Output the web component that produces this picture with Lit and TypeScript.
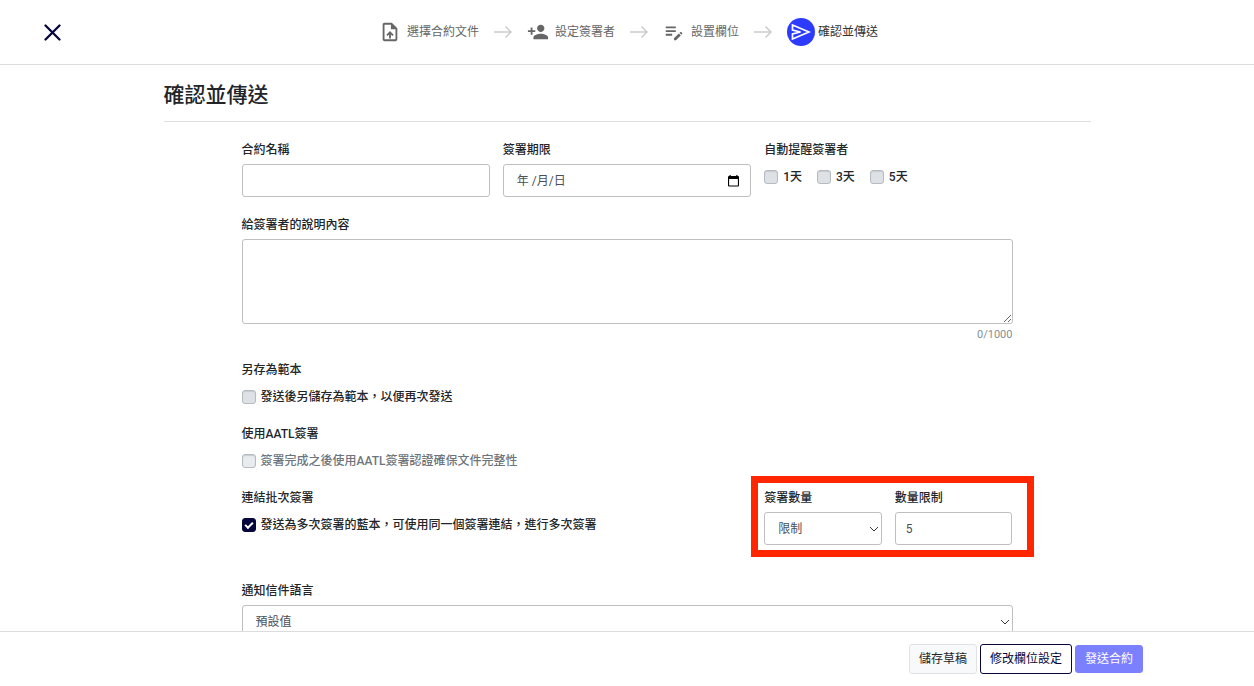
import { LitElement, html, css, svg } from "lit";
import { customElement, state } from "lit/decorators.js";

const uploadIcon = svg`<path d="M14 2H6c-1.1 0-1.99.9-1.99 2L4 20c0 1.1.89 2 1.99 2H18c1.1 0 2-.9 2-2V8l-6-6zm4 18H6V4h7v5h5v11zM8 15.01l1.41 1.41L11 14.84V19h2v-4.16l1.59 1.59L16 15.01 12.01 11 8 15.01z"/>`;
const personIcon = svg`<path d="M15 12c2.21 0 4-1.79 4-4s-1.79-4-4-4-4 1.79-4 4 1.79 4 4 4zm-9-2V7H4v3H1v2h3v3h2v-3h3v-2H6zm9 4c-2.67 0-8 1.34-8 4v2h16v-2c0-2.66-5.33-4-8-4z"/>`;
const fieldsIcon = svg`<path d="M3 10h11v2H3v-2zm0-2h11V6H3v2zm0 8h7v-2H3v2zm15.01-3.13.71-.71c.39-.39 1.02-.39 1.41 0l.71.71c.39.39.39 1.02 0 1.41l-.71.71-2.12-2.12zm-.71.71-5.3 5.3V21h2.12l5.3-5.3-2.12-2.12z"/>`;

const steps = [
  { label: "選擇合約文件", icon: uploadIcon },
  { label: "設定簽署者", icon: personIcon },
  { label: "設置欄位", icon: fieldsIcon },
];

@customElement("app-root")
export class AppRoot extends LitElement {
  static styles = css`
    :host {
      display: flex;
      flex-direction: column;
      height: 100vh;
      background: #fff;
      color: #212529;
      font: 12px/18px Roboto, "Noto Sans CJK TC", sans-serif;
    }
    *, *::before, *::after { box-sizing: border-box; }
    input, textarea, select, button { font: inherit; color: inherit; margin: 0; }
    svg { display: block; }

    .top {
      display: grid;
      grid-template-columns: 1fr auto 1fr;
      align-items: center;
      height: 65px;
      flex: none;
      border-bottom: 1px solid #dcdcdf;
    }
    .close {
      justify-self: start;
      margin-left: 40px;
      padding: 4px;
      border: 0;
      background: none;
      color: #06063c;
      cursor: pointer;
    }
    .steps {
      display: flex;
      align-items: center;
      gap: 14px;
      margin: 0;
      padding: 0 0 0 3px;
      list-style: none;
      color: #666;
    }
    .step { display: flex; align-items: center; gap: 6px; }
    .step.current { gap: 3px; color: #333; }
    .arrow { color: #ccc; }
    .disc {
      display: grid;
      place-items: center;
      width: 28px;
      height: 28px;
      border-radius: 50%;
      background: #2d3bff;
      color: #fff;
    }

    .scroll { flex: 1; min-height: 0; overflow-y: auto; scrollbar-width: none; }
    .page { max-width: 927px; margin: 0 auto; padding-bottom: 24px; }
    h1 {
      margin: 0;
      padding: 14px 0 10px;
      border-bottom: 1px solid #dedede;
      font-size: 21px;
      line-height: 32px;
      font-weight: 500;
    }
    .form { padding: 19px 78px 0; }
    .grid { display: grid; grid-template-columns: repeat(6, 1fr); column-gap: 13px; }
    .two { grid-column: span 2; }
    .four { grid-column: span 4; }
    .label, .check { font-weight: 500; }
    .label { display: block; margin-bottom: 5px; padding: 0; }
    .group { border: 0; margin: 0; padding: 0; min-width: 0; }
    .block { margin-top: 19px; }
    .section { margin-bottom: 19px; }
    .section .label, .group .label { margin-bottom: 9px; }

    .control {
      display: block;
      width: 100%;
      height: 33px;
      padding: 0 10px;
      border: 1px solid #bfbfbf;
      border-radius: 3px;
      background: #fff;
      color: #495057;
    }
    .area { height: 85px; padding: 6px 10px; }
    .date { display: flex; align-items: center; padding: 0 11px 0 13px; }
    .date input { flex: 1; min-width: 0; padding: 0; border: 0; outline: 0; background: none; }
    .date input::placeholder { color: #495057; opacity: 1; }
    .date button { padding: 0; border: 0; background: none; color: #000; }
    .select { display: grid; align-items: center; }
    .select > * { grid-area: 1 / 1; }
    .select select { appearance: none; padding: 0 24px 0 13px; }
    .select svg { justify-self: end; margin-right: 3px; color: #343a40; pointer-events: none; }
    .count { margin-top: 2px; font-size: 11px; line-height: 18px; text-align: right; color: #868e96; }
    .count + .section, .area + .section { margin-top: 0; }

    .checks { display: flex; gap: 15px; }
    .check { display: flex; align-items: center; gap: 5px; }
    .check.muted { color: #6c757d; }
    .check input {
      appearance: none;
      display: grid;
      place-items: center;
      flex: none;
      width: 14px;
      height: 14px;
      border: 1px solid #b5bbc1;
      border-radius: 3px;
      background: #dee2e6;
      box-shadow: inset 0 1px 1px #c6cbd0;
    }
    .check.muted input { background: #e9ecef; }
    .check input:checked { border-color: #06063c; background: #06063c; box-shadow: none; }
    .check input:checked::before {
      content: "";
      width: 8px;
      height: 5px;
      margin-bottom: 2px;
      border: solid #fff;
      border-width: 0 0 2px 2px;
      transform: rotate(-45deg);
    }

    .templates { margin-top: 17px; }
    .limits {
      position: relative;
      display: grid;
      grid-template-columns: 1fr 1fr;
      gap: 13px;
    }
    .limits::after {
      content: "";
      position: absolute;
      inset: -13px -22px -12px -13px;
      border: 7px solid #ff2600;
      pointer-events: none;
    }
    .language { margin-top: 37px; }

    .bottom {
      display: flex;
      flex: none;
      align-items: center;
      justify-content: flex-end;
      gap: 3px;
      height: 55px;
      padding-right: 111px;
      border-top: 1px solid #dcdcdf;
    }
    .btn {
      height: 30px;
      padding: 0 9px;
      border: 1px solid #e0e2e4;
      border-radius: 3px;
      background: #f8f9fa;
      cursor: pointer;
    }
    .btn.outline { border-color: #06063c; background: #fff; color: #06063c; }
    .btn.primary { height: 28px; border-color: #7b80ff; background: #7b80ff; color: #fff; }
  `;

  @state() private message = "";

  private chevron() {
    return html`<svg width="10" height="6" viewBox="0 0 10 6" fill="none" stroke="currentColor" aria-hidden="true"><path d="M1 1l4 4 4-4"/></svg>`;
  }

  private arrow() {
    return html`<li class="arrow" aria-hidden="true">
      <svg width="20" height="14" viewBox="0 0 20 14" fill="none" stroke="currentColor" stroke-width="1.5"><path d="M1 7h17M12.5 1.5 18 7l-5.5 5.5"/></svg>
    </li>`;
  }

  render() {
    return html`
      <header class="top">
        <button class="close" aria-label="關閉">
          <svg width="17" height="17" viewBox="0 0 17 17" fill="none" stroke="currentColor" stroke-width="2.3" stroke-linecap="round"><path d="M1.5 1.5l14 14M15.5 1.5l-14 14"/></svg>
        </button>
        <ol class="steps">
          ${steps.map((s) => html`
            <li class="step">
              <svg width="22" height="22" viewBox="0 0 24 24" fill="currentColor" aria-hidden="true">${s.icon}</svg>
              <span>${s.label}</span>
            </li>
            ${this.arrow()}`)}
          <li class="step current" aria-current="step">
            <span class="disc">
              <svg width="20" height="18" viewBox="0 0 20 18" fill="none" stroke="currentColor" stroke-width="1.7" aria-hidden="true"><path d="M1.5 2 18 9 1.500 16V11L9.5 9 1.500 7z"/></svg>
            </span>
            <span>確認並傳送</span>
          </li>
        </ol>
      </header>

      <main class="scroll">
        <div class="page">
          <h1>確認並傳送</h1>
          <form class="form" @submit=${(e: Event) => e.preventDefault()}>
            <div class="grid">
              <div class="two">
                <label class="label" for="name">合約名稱</label>
                <input class="control" id="name" type="text" />
              </div>
              <div class="two">
                <label class="label" for="due">簽署期限</label>
                <div class="control date">
                  <input id="due" type="text" placeholder="年 /月/日" />
                  <button type="button" aria-label="選擇日期">
                    <svg width="11" height="12" viewBox="0 0 11 12" fill="currentColor"><path fill-rule="evenodd" d="M1.5 0h1.200v1h5.600V0h1.200v1h.5a1 1 0 0 1 1 1v8.500a1 1 0 0 1-1 1H1a1 1 0 0 1-1-1V2a1 1 0 0 1 1-1h.5zM1.100 4v6.400h8.800V4z"/></svg>
                  </button>
                </div>
              </div>
              <fieldset class="group two">
                <legend class="label">自動提醒簽署者</legend>
                <div class="checks">
                  ${[1, 3, 5].map((d) => html`<label class="check"><input type="checkbox" />${d}天</label>`)}
                </div>
              </fieldset>
            </div>

            <div class="block">
              <label class="label" for="message">給簽署者的說明內容</label>
              <textarea class="control area" id="message" maxlength="1000"
                @input=${(e: Event) => (this.message = (e.target as HTMLTextAreaElement).value)}></textarea>
              <div class="count">${this.message.length}/1000</div>
            </div>

            <div class="section templates">
              <div class="label">另存為範本</div>
              <label class="check"><input type="checkbox" />發送後另儲存為範本，以便再次發送</label>
            </div>
            <div class="section">
              <div class="label">使用AATL簽署</div>
              <label class="check muted"><input type="checkbox" disabled />簽署完成之後使用AATL簽署認證確保文件完整性</label>
            </div>
            <div class="grid">
              <div class="group four">
                <div class="label">連結批次簽署</div>
                <label class="check"><input type="checkbox" checked />發送為多次簽署的藍本，可使用同一個簽署連結，進行多次簽署</label>
              </div>
              <div class="limits two">
                <div>
                  <label class="label" for="amount">簽署數量</label>
                  <div class="select">
                    <select class="control" id="amount"><option>限制</option></select>
                    ${this.chevron()}
                  </div>
                </div>
                <div>
                  <label class="label" for="limit">數量限制</label>
                  <input class="control" id="limit" type="text" inputmode="numeric" value="5" />
                </div>
              </div>
            </div>

            <div class="language">
              <label class="label" for="language">通知信件語言</label>
              <div class="select">
                <select class="control" id="language"><option>預設值</option></select>
                ${this.chevron()}
              </div>
            </div>
          </form>
        </div>
      </main>

      <footer class="bottom">
        <button class="btn">儲存草稿</button>
        <button class="btn outline">修改欄位設定</button>
        <button class="btn primary">發送合約</button>
      </footer>
    `;
  }
}
